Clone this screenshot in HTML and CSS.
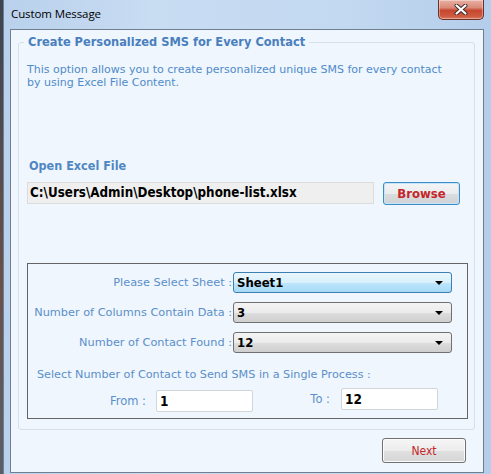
FILE: index.html
```html
<!DOCTYPE html>
<html>
<head>
<meta charset="utf-8">
<title>Custom Message</title>
<link rel="stylesheet" href="styles.css">
</head>
<body>
<div class="window">
  <div class="titlebar">
    <span class="title">Custom Message</span>
    <button class="close" aria-label="Close">
      <svg width="14" height="11" viewBox="0 0 14 11">
        <path d="M2.5 1.5 L11.5 9.5 M11.5 1.5 L2.5 9.5" stroke="#3a2a2a" stroke-width="4" stroke-linecap="round"/>
        <path d="M2.5 1.5 L11.5 9.5 M11.5 1.5 L2.5 9.5" stroke="#ffffff" stroke-width="2.2" stroke-linecap="round"/>
      </svg>
    </button>
  </div>
  <div class="client">
    <fieldset class="group">
      <legend class="legend">Create Personalized SMS for Every Contact</legend>
      <p class="desc">This option allows you to create personalized unique SMS for every contact<br>by using Excel File Content.</p>
      <h2 class="subhead">Open Excel File</h2>
      <div class="file-row">
        <div class="path">C:\Users\Admin\Desktop\phone-list.xlsx</div>
        <button class="browse">Browse</button>
      </div>
      <div class="panel">
        <div class="form-grid">
          <label class="lbl">Please Select Sheet :</label>
          <div class="combo combo-active"><span>Sheet1</span><i class="arrow"></i></div>
          <label class="lbl">Number of Columns Contain Data :</label>
          <div class="combo"><span>3</span><i class="arrow"></i></div>
          <label class="lbl">Number of Contact Found :</label>
          <div class="combo"><span>12</span><i class="arrow"></i></div>
        </div>
        <div class="range-title">Select Number of Contact to Send SMS in a Single Process :</div>
        <div class="range-row">
          <div class="range-from">
            <span class="range-lbl from-lbl">From :</span>
            <div class="num">1</div>
          </div>
          <div class="range-to">
            <span class="range-lbl to-lbl">To :</span>
            <div class="num">12</div>
          </div>
        </div>
      </div>
    </fieldset>
    <div class="footer">
      <button class="next">Next</button>
    </div>
  </div>
</div>
</body>
</html>
```
FILE: styles.css
```css
* { box-sizing: border-box; }
html, body { margin: 0; padding: 0; }
body {
  width: 491px;
  height: 474px;
  overflow: hidden;
  background: linear-gradient(#3d4550, #6b5048 60%, #5a5f66);
  font-family: "DejaVu Sans", sans-serif;
}
.window {
  margin-left: 3px;
  width: 488px;
  height: 474px;
  padding: 0 7px 1px 6px;
  border-left: 1px solid #6a8099;
  background: linear-gradient(90deg, #b9d1ec, #c8dcf2 30%, #c3d9f1 70%, #b4cdea);
  display: flex;
  flex-direction: column;
}
.titlebar {
  height: 29px;
  display: flex;
  justify-content: space-between;
  align-items: flex-start;
}
.title {
  font-family: "Open Sans", "Noto Sans", sans-serif;
  font-size: 11.5px;
  color: #000;
  margin-top: 6px;
  margin-left: 1px;
  letter-spacing: -0.1px;
}
.close {
  width: 46px;
  height: 20px;
  padding: 0;
  border: 1px solid #6b3128;
  border-top: none;
  border-radius: 0 0 5px 5px;
  background: linear-gradient(#e9b1a4, #d98a78 40%, #c8462f 55%, #cd5a40 85%, #d97a5c);
  box-shadow: inset 0 0 0 1px rgba(255,255,255,0.35);
  display: flex;
  align-items: center;
  justify-content: center;
}
.close svg { display: block; margin-top: -1px; }
.client {
  flex: 1;
  background: #eff6fd;
  border: 1px solid #6f7f90;
  display: flex;
  flex-direction: column;
  padding: 0 8px 0 7px;
}
.group {
  margin: 4px 0 0 0;
  padding: 0 0 10px 0;
  border: 1px solid #d6e0e8;
  border-radius: 3px;
  min-width: 0;
}
.legend {
  margin-left: 5px;
  padding: 0 4px;
  font-family: "DejaVu Sans Condensed", "DejaVu Sans", sans-serif;
  font-size: 12.7px;
  font-weight: bold;
  color: #4a7fbd;
  line-height: 16px;
}
.desc {
  margin: 13px 0 0 8px;
  font-size: 11px;
  line-height: 13px;
  color: #4f8bca;
}
.subhead {
  margin: 69px 0 0 10px;
  font-family: "DejaVu Sans Condensed", "DejaVu Sans", sans-serif;
  font-size: 12.5px;
  font-weight: bold;
  line-height: 16px;
  color: #4f87c4;
}
.file-row {
  margin: 8px 0 0 8px;
  display: flex;
  align-items: flex-start;
}
.path {
  width: 347px;
  height: 22px;
  background: #efefef;
  border: 1px solid #dcdcdc;
  font-family: "DejaVu Sans Condensed", "DejaVu Sans", sans-serif;
  font-size: 13.3px;
  font-weight: bold;
  color: #000;
  line-height: 20px;
  padding-left: 2px;
}
.browse {
  margin-left: 9px;
  width: 77px;
  height: 23px;
  border: 1px solid #3c8cc6;
  border-radius: 3px;
  background: linear-gradient(#f4f5f6, #e9ebed 50%, #dadcdf 51%, #d0d3d6);
  box-shadow: inset 0 0 0 1px #c6e4f7;
  font-family: "DejaVu Sans Condensed", "DejaVu Sans", sans-serif;
  font-size: 13px;
  font-weight: bold;
  color: #c4262a;
  padding: 0;
}
.panel {
  margin: 58px 6px 0 8px;
  border: 1px solid #646464;
  padding: 8px 0 6px 0;
}
.form-grid {
  display: grid;
  grid-template-columns: 205px 219px;
  row-gap: 9px;
  align-items: center;
}
.lbl {
  text-align: right;
  font-size: 11.3px;
  color: #5b8fca;
  padding-right: 1px;
}
.combo {
  height: 21px;
  border: 1px solid #707070;
  border-radius: 3px;
  background: linear-gradient(#f4f4f4, #ebebeb 50%, #dddddd 51%, #cfcfcf);
  display: flex;
  align-items: center;
  justify-content: space-between;
  padding: 0 8px 0 3px;
  font-family: "DejaVu Sans Condensed", "DejaVu Sans", sans-serif;
  font-size: 13px;
  font-weight: bold;
  color: #000;
}
.combo-active {
  border-color: #3c7fb1;
  background: linear-gradient(#eaf6fd, #d9f0fc 50%, #bee6fd 51%, #a7d9f5);
}
.arrow {
  width: 0;
  height: 0;
  border-left: 4px solid transparent;
  border-right: 4px solid transparent;
  border-top: 4px solid #000;
}
.range-title {
  margin: 15px 0 0 9px;
  font-size: 11.2px;
  line-height: 14px;
  color: #5b8fca;
}
.range-row {
  margin-top: 6px;
  display: flex;
  align-items: flex-start;
}
.range-from, .range-to {
  display: flex;
  align-items: center;
}
.range-from { margin-top: 2px; }
.range-lbl {
  text-align: right;
  font-size: 11.5px;
  color: #5b8fca;
}
.from-lbl { width: 118px; margin-right: 10px; }
.to-lbl { width: 77px; margin-right: 11px; }
.num {
  width: 97px;
  height: 22px;
  background: #fff;
  border: 1px solid #d2d6da;
  border-radius: 2px;
  font-family: "DejaVu Sans Condensed", "DejaVu Sans", sans-serif;
  font-size: 13.5px;
  font-weight: bold;
  color: #000;
  line-height: 20px;
  padding-left: 3px;
}
.footer {
  display: flex;
  justify-content: flex-end;
  padding: 8px 9px 0 0;
}
.next {
  width: 84px;
  height: 25px;
  border: 1px solid #707070;
  border-radius: 3px;
  background: linear-gradient(#f5f5f5, #ececec 50%, #e0e0e0 51%, #d6d6d6);
  box-shadow: inset 0 0 0 1px #fbfbfb;
  font-family: "DejaVu Sans Condensed", "DejaVu Sans", sans-serif;
  font-size: 12px;
  color: #c4262a;
  padding: 0;
}
```
